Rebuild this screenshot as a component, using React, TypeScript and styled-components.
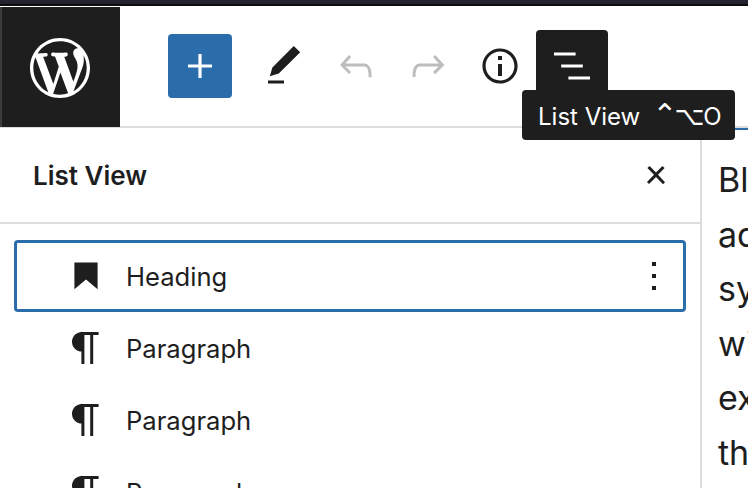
import { createGlobalStyle } from 'styled-components'
import styled from 'styled-components'

const GlobalStyle = createGlobalStyle`
  html, body {
    margin: 0;
    padding: 0;
    background: #fff;
  }
  body {
    width: 748px;
    height: 488px;
    overflow: hidden;
    font-family: Inter, "Liberation Sans", sans-serif;
    color: #1e1e1e;
  }
`

const Page = styled.div`
  position: relative;
  display: flex;
  flex-direction: column;
  width: 748px;
  height: 488px;
  overflow: hidden;
`

const TopStrip = styled.div`
  height: 6px;
  background: #23232f;
  border-bottom: 2px solid #0c0c0e;
  box-sizing: border-box;
`

const Header = styled.header`
  display: flex;
  align-items: center;
  height: 122px;
  flex: none;
  box-sizing: border-box;
  border-bottom: 2px solid #dcdcdc;
`

const LogoBlock = styled.div`
  display: flex;
  align-items: center;
  justify-content: center;
  width: 120px;
  height: 120px;
  padding-top: 2px;
  margin-bottom: -2px;
  background: #1e1e1e;
  color: #fff;
  box-shadow: inset 2px 0 0 #3c3c3c;
  box-sizing: border-box;
`

const Toolbar = styled.div`
  display: flex;
  align-items: center;
  padding-left: 48px;
`

const InserterButton = styled.div`
  display: flex;
  align-items: center;
  justify-content: center;
  width: 64px;
  height: 64px;
  margin-right: 16px;
  border-radius: 4px;
  background: #2b6cab;
  color: #fff;
`

const ToolButton = styled.div<{ $active?: boolean; $disabled?: boolean }>`
  display: flex;
  align-items: center;
  justify-content: center;
  width: 72px;
  height: 72px;
  border-radius: 4px;
  background: ${p => (p.$active ? '#1e1e1e' : 'transparent')};
  color: ${p => (p.$active ? '#fff' : p.$disabled ? '#bdbdbd' : '#1e1e1e')};
`

const Tooltip = styled.div`
  position: absolute;
  left: 522px;
  top: 90px;
  display: flex;
  align-items: baseline;
  gap: 12px;
  width: 213px;
  height: 50px;
  padding: 9px 0 0 16px;
  box-sizing: border-box;
  border-radius: 4px;
  background: #1e1e1e;
  color: #fff;
  font-size: 24px;
  line-height: 32px;
  white-space: nowrap;
`

const Shortcut = styled.span`
  font-size: 24px;
`

const ModifierKey = styled.span<{ $size: number; $tight?: number }>`
  font-family: "DejaVu Sans", sans-serif;
  font-size: ${p => p.$size}px;
  letter-spacing: ${p => p.$tight ?? 0}px;
  line-height: 32px;
`

const Body = styled.div`
  display: flex;
  flex: 1;
  min-height: 0;
`

const Sidebar = styled.aside`
  width: 702px;
  flex: none;
  box-sizing: border-box;
  border-right: 2px solid #dcdcdc;
`

const PanelHeader = styled.div`
  display: flex;
  align-items: center;
  justify-content: space-between;
  height: 96px;
  padding: 0 20px 0 33px;
  box-sizing: border-box;
  border-bottom: 2px solid #dcdcdc;
`

const PanelTitle = styled.h2`
  margin: 0;
  font-size: 26px;
  font-weight: 600;
`

const List = styled.div`
  display: flex;
  flex-direction: column;
  padding: 16px 14px 0;
`

const Row = styled.div<{ $selected?: boolean }>`
  display: flex;
  align-items: center;
  flex: none;
  height: 72px;
  padding-left: 45px;
  padding-right: 5px;
  box-sizing: border-box;
  border-radius: 4px;
  border: 3px solid ${p => (p.$selected ? '#2b6cab' : 'transparent')};
`

const RowLabel = styled.span`
  flex: 1;
  margin-left: 16px;
  font-size: 25.6px;
`

const Content = styled.main`
  flex: 1;
  min-width: 0;
  overflow: hidden;
  border-top: 2px solid #2b6cab;
  padding: 23px 0 0 16px;
  font-family: Inter, sans-serif;
  font-size: 34px;
  line-height: 54.5px;
  white-space: nowrap;
`

const Icon = ({ d, size = 48 }: { d: string; size?: number }) => (
  <svg width={size} height={size} viewBox="0 0 24 24" fill="currentColor">
    <path d={d} />
  </svg>
)

const wpLogo =
  'M20 10c0-5.51-4.49-10-10-10C4.48 0 0 4.49 0 10c0 5.52 4.48 10 10 10 5.51 0 10-4.48 10-10zM7.78 15.37L4.37 6.22c.55-.02 1.17-.08 1.17-.08.5-.06.44-1.13-.06-1.11 0 0-1.45.11-2.37.11-.18 0-.37 0-.58-.01C4.12 2.69 6.87 1.11 10 1.11c2.33 0 4.45.87 6.05 2.34-.68-.11-1.65.39-1.65 1.58 0 .74.45 1.36.9 2.1.35.61.55 1.36.55 2.46 0 1.49-1.4 5-1.4 5l-3.03-8.37c.54-.02.82-.17.82-.17.5-.05.44-1.25-.06-1.22 0 0-1.44.12-2.38.12-.87 0-2.33-.12-2.33-.12-.5-.03-.56 1.2-.06 1.22l.92.08 1.26 3.41zM17.41 10c.24-.64.74-1.87.43-4.25.7 1.29 1.05 2.71 1.05 4.25 0 3.29-1.73 6.24-4.4 7.78.97-2.59 1.94-5.2 2.92-7.78zM6.1 18.09C3.12 16.65 1.11 13.53 1.11 10c0-1.3.23-2.48.72-3.59C3.25 10.3 4.67 14.2 6.1 18.09zm4.03-6.63l2.58 6.98c-.86.29-1.76.45-2.71.45-.79 0-1.57-.11-2.29-.33.81-2.38 1.62-4.74 2.42-7.1z'
const plus = 'M18 11.2h-5.2V6h-1.6v5.2H6v1.6h5.2V18h1.6v-5.2H18z'
const pencil = 'M20.1 5.1L16.9 2 6.2 12.7l-1.3 4.4 4.5-1.3L20.1 5.1zM4 20.8h8v-1.5H4v1.5z'
const undo = 'M18.3 11.7c-.6-.6-1.4-.9-2.3-.9H6.7l2.9-3.3-1.1-1-4.5 5L8.5 16l1-1-2.7-2.7H16c.5 0 .9.2 1.3.5 1 1 1 3.4 1 4.5v.3h1.5v-.2c0-1.5 0-4.3-1.5-5.7z'
const redo = 'M15.6 6.5l-1.1 1 2.9 3.3H8c-.9 0-1.7.3-2.3.9-1.4 1.5-1.4 4.2-1.4 5.6v.2h1.5v-.3c0-1.1 0-3.5 1-4.5.3-.3.7-.5 1.3-.5h9.2L14.5 15l1.1 1.1 4.6-4.6-4.6-5z'
const info = 'M12 3.2c-4.8 0-8.8 3.9-8.8 8.8 0 4.8 3.9 8.8 8.8 8.8 4.8 0 8.8-3.9 8.8-8.8 0-4.8-4-8.8-8.8-8.8zm0 16c-4 0-7.2-3.3-7.2-7.2C4.8 8 8 4.8 12 4.8s7.2 3.3 7.2 7.2c0 4-3.2 7.2-7.2 7.2zM11 17h2v-6h-2v6zm0-8h2V7h-2v2z'
const listView = 'M13.8 5.2H3v1.5h10.8V5.2zm-3.6 12v1.5H21v-1.5H10.2zm7.2-6H6.6v1.5h10.8v-1.5z'
const close = 'M13 11.9l3.3-3.4-1.1-1-3.2 3.3-3.2-3.3-1.1 1 3.3 3.4-3.5 3.6 1 1L12 13l3.5 3.6 1-1z'
const bookmark = 'M6.2 5.2v13.4l5.8-4.8 5.8 4.8V5.2z'
const pilcrow = 'M18.3 4H9.9v-.1l-.9.2c-2.3.4-4 2.4-4 4.8s1.7 4.4 4 4.8l.7.1V20h1.5V5.5h2.9V20h1.5V5.5h2.7V4z'
const more = 'M13 19h-2v-2h2v2zm0-6h-2v-2h2v2zm0-6h-2V5h2v2z'

const blocks = [
  { label: 'Heading', icon: bookmark, selected: true },
  { label: 'Paragraph', icon: pilcrow },
  { label: 'Paragraph', icon: pilcrow },
  { label: 'Paragraph', icon: pilcrow },
]

export default function App() {
  return (
    <Page>
      <GlobalStyle />
      <TopStrip />
      <Header>
        <LogoBlock>
          <svg width={60} height={60} viewBox="0 0 20 20" fill="currentColor">
            <path d={wpLogo} />
          </svg>
        </LogoBlock>
        <Toolbar>
          <InserterButton>
            <Icon d={plus} />
          </InserterButton>
          <ToolButton><Icon d={pencil} /></ToolButton>
          <ToolButton $disabled><Icon d={undo} /></ToolButton>
          <ToolButton $disabled><Icon d={redo} /></ToolButton>
          <ToolButton><Icon d={info} /></ToolButton>
          <ToolButton $active><Icon d={listView} /></ToolButton>
        </Toolbar>
      </Header>
      <Body>
        <Sidebar>
          <PanelHeader>
            <PanelTitle>List View</PanelTitle>
            <Icon d={close} />
          </PanelHeader>
          <List>
            {blocks.map((b, i) => (
              <Row key={i} $selected={b.selected}>
                <Icon d={b.icon} />
                <RowLabel>{b.label}</RowLabel>
                {b.selected && <Icon d={more} />}
              </Row>
            ))}
          </List>
        </Sidebar>
        <Content>
          <div>Blocks</div>
          <div>add</div>
          <div>syntax</div>
          <div>with</div>
          <div>extra</div>
          <div>the</div>
        </Content>
      </Body>
      <Tooltip>
        List View
        <Shortcut>
          <ModifierKey $size={30} $tight={-3}>⌃</ModifierKey>
          <ModifierKey $size={26} $tight={-1}>⌥</ModifierKey>O
        </Shortcut>
      </Tooltip>
    </Page>
  )
}
